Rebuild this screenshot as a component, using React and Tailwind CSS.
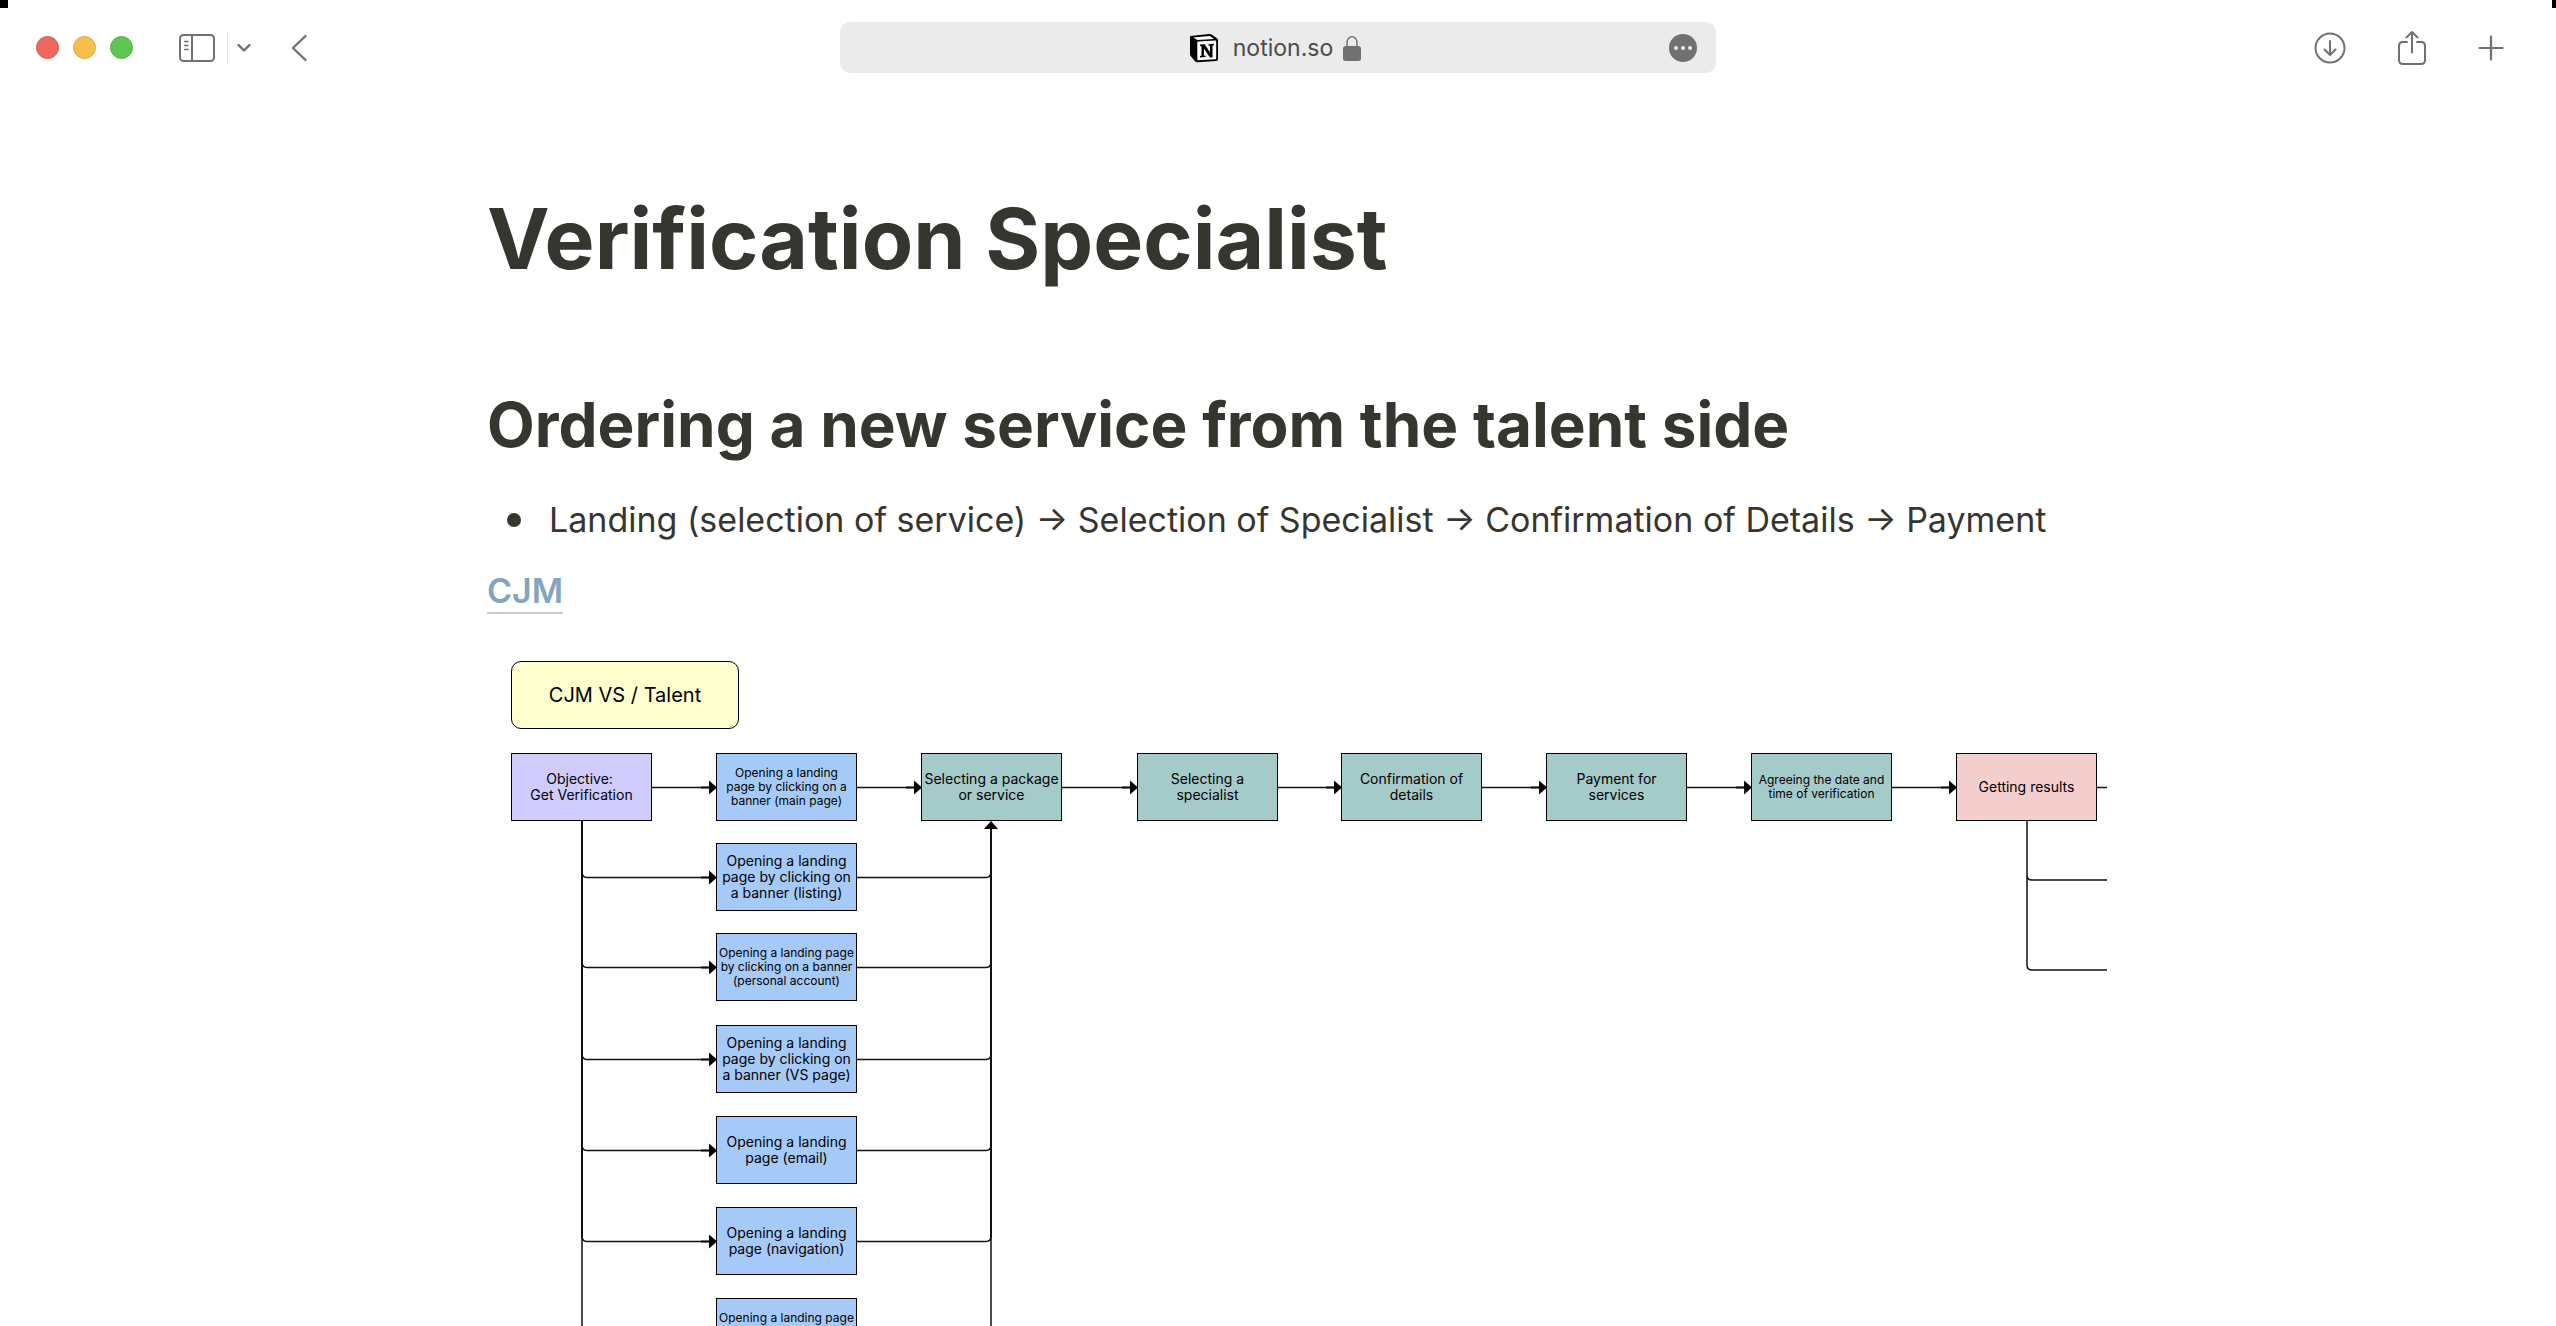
const NODE_W = 141;
const NODE_H = 68;

const nodes = [
  { x: 24, y: 113, tone: "bg-[#cfccfb]", lines: ["Objective: ", "Get Verification"] },
  { x: 229, y: 113, tone: "bg-[#a6caf7]", small: true, lines: ["Opening a landing", "page by clicking on a", "banner (main page)"] },
  { x: 434, y: 113, tone: "bg-[#a5caca]", lines: ["Selecting a package", "or service"] },
  { x: 650, y: 113, tone: "bg-[#a5caca]", lines: ["Selecting a", "specialist"] },
  { x: 854, y: 113, tone: "bg-[#a5caca]", lines: ["Confirmation of", "details"] },
  { x: 1059, y: 113, tone: "bg-[#a5caca]", lines: ["Payment for", "services"] },
  { x: 1264, y: 113, tone: "bg-[#a5caca]", small: true, lines: ["Agreeing the date and", "time of verification"] },
  { x: 1469, y: 113, tone: "bg-[#f4cecc]", lines: ["Getting results"] },
  { x: 229, y: 203, tone: "bg-[#a6caf7]", lines: ["Opening a landing", "page by clicking on", "a banner (listing)"] },
  { x: 229, y: 293, tone: "bg-[#a6caf7]", small: true, lines: ["Opening a landing page", "by clicking on a banner", "(personal account)"] },
  { x: 229, y: 385, tone: "bg-[#a6caf7]", lines: ["Opening a landing", "page by clicking on", "a banner (VS page)"] },
  { x: 229, y: 476, tone: "bg-[#a6caf7]", lines: ["Opening a landing", "page (email)"] },
  { x: 229, y: 567, tone: "bg-[#a6caf7]", lines: ["Opening a landing", "page (navigation)"] },
  { x: 229, y: 658, tone: "bg-[#a6caf7]", small: true, lines: ["Opening a landing page", " ", " "] },
];

const mainRow = nodes.slice(0, 8);
const branchRows = [237, 327, 419, 510, 601, 692];
const MAIN_Y = 147;
const LEFT_BUS = 95;
const RIGHT_BUS = 504;

function Node({ x, y, tone, small, lines }) {
  return (
    <div
      className={`absolute flex flex-col items-center justify-center whitespace-pre border border-black text-center text-black ${tone} ${
        small ? "text-[12px] leading-[14px]" : "text-[14px] leading-[16px]"
      }`}
      style={{ left: x, top: y, width: NODE_W, height: NODE_H }}
    >
      {lines.map((line, i) => (
        <span key={i}>{line}</span>
      ))}
    </div>
  );
}

function ArrowRight({ x, y }) {
  return (
    <>
      <path d={`M${x - 15} ${y}H${x - 6}`} strokeWidth="2" />
      <path d={`M${x - 7} ${y - 7}L${x + 1} ${y}L${x - 7} ${y + 7}Z`} fill="#000" stroke="none" />
    </>
  );
}

function Connectors() {
  return (
    <svg className="absolute inset-0 h-full w-full" fill="none" stroke="#111" strokeWidth="1.5" aria-hidden="true">
      {mainRow.slice(0, -1).map((n, i) => (
        <g key={n.x}>
          <path d={`M${n.x + NODE_W} ${MAIN_Y + 0.5}H${mainRow[i + 1].x - 6}`} />
          <ArrowRight x={mainRow[i + 1].x} y={MAIN_Y + 0.5} />
        </g>
      ))}
      {branchRows.map((y) => (
        <g key={y}>
          <path d={`M${LEFT_BUS} 181V${y - 5}Q${LEFT_BUS} ${y + 0.5} ${LEFT_BUS + 5} ${y + 0.5}H224`} />
          <ArrowRight x={229} y={y + 0.5} />
          <path d={`M370 ${y + 0.5}H${RIGHT_BUS - 5}Q${RIGHT_BUS} ${y + 0.5} ${RIGHT_BUS} ${y - 5}V188`} />
        </g>
      ))}
      <path d={`M${LEFT_BUS} 181V597M${RIGHT_BUS} 186V597`} strokeWidth="2" />
      <path d={`M${RIGHT_BUS - 7} 189L${RIGHT_BUS} 181L${RIGHT_BUS + 7} 189Z`} fill="#000" stroke="none" />
      <path d="M1610 147.5H1630M1540 181V235Q1540 240 1545 240H1630M1540 181V325Q1540 330 1545 330H1630" />
    </svg>
  );
}

function NotionLogo() {
  return (
    <svg viewBox="0 0 30 30" className="h-[30px] w-[30px]" aria-hidden="true">
      <path d="M1.5 3 20 1a4 4 0 0 1 3 .8L28 5.2q1 .8 1 2V26q0 1.800-2 2L8.500 29.200q-1.600.1-2.500-1L1.800 23.300Q1 22.300 1 21V4.500Q1 3.200 1.500 3Z" fill="#000" />
      <path d="m4.200 4.400 16-1.400q.8 0 1.300.4l3.500 2.500L8.500 7Z" fill="#fff" />
      <path d="M8.300 9.600q0-1 1-1.100l17-1q.9 0 .9.900v16.800q0 1-1 1.100L9.300 27.200q-1 0-1-1Z" fill="#fff" />
      <path d="M11 11.600l4.600-.3 5.400 8v-6.600l-1.600-.2v-1.300l5.600-.4v1.300l-1.500.5v11.800l-2.600.2-6-9v6.800l1.800.4v1.200l-5.700.4v-1.300l1.500-.5V13.200l-1.500-.3Z" fill="#000" />
    </svg>
  );
}

export default function App() {
  return (
    <div className="relative flex h-screen flex-col overflow-hidden bg-white font-['Inter',sans-serif] text-[#373530]">
      <span className="absolute left-0 top-0 h-2 w-2 bg-black" />
      <span className="absolute right-0 top-0 h-2 w-1 bg-black" />

      <header className="grid h-[95px] shrink-0 grid-cols-[1fr_876px_1fr] items-center text-[#717171]">
        <div className="flex items-center pl-9">
          <div className="flex gap-[14px]">
            <button aria-label="Close window" className="h-[23px] w-[23px] rounded-full border border-[#d65a51] bg-[#eb695f]" />
            <button aria-label="Minimize window" className="h-[23px] w-[23px] rounded-full border border-[#dda943] bg-[#f4bf4f]" />
            <button aria-label="Zoom window" className="h-[23px] w-[23px] rounded-full border border-[#55b046] bg-[#61c554]" />
          </div>
          <button aria-label="Show sidebar" className="ml-[46px]">
            <svg viewBox="0 0 36 28" className="h-7 w-9" fill="none" stroke="currentColor" strokeWidth="2" strokeLinecap="round">
              <rect x="1" y="1" width="34" height="26" rx="3.500" />
              <path d="M13 1v26" />
              <path d="M5.500 7.500h3.500M5.500 11.500h3.500M5.500 15.500h3.500" strokeWidth="1.500" />
            </svg>
          </button>
          <span className="ml-3 h-8 w-px bg-[#e4e4e4]" />
          <button aria-label="Sidebar options" className="ml-[9px]">
            <svg viewBox="0 0 14 10" className="h-[10px] w-[14px]" fill="none" stroke="currentColor" strokeWidth="2.400" strokeLinecap="round" strokeLinejoin="round">
              <path d="m1.500 2 5.500 5.500L12.500 2" />
            </svg>
          </button>
          <button aria-label="Back" className="ml-10">
            <svg viewBox="0 0 16 28" className="h-7 w-4" fill="none" stroke="currentColor" strokeWidth="2.400" strokeLinecap="round" strokeLinejoin="round">
              <path d="M14.500 2 2 14l12.500 12" />
            </svg>
          </button>
        </div>

        <div className="relative flex h-[51px] items-center justify-center gap-[10px] rounded-[10px] bg-[#ebebeb] pr-[6px]">
          <NotionLogo />
          <span className="ml-1 text-[23px] leading-8 text-[#4b4b4b]">notion.so</span>
          <svg viewBox="0 0 18 26" className="h-[26px] w-[18px]" aria-hidden="true">
            <path d="M4 13V7.500a5 5.700 0 0 1 10 0V13" fill="none" stroke="#717171" strokeWidth="1.500" />
            <rect x="0" y="11" width="18" height="15" rx="2.500" fill="#717171" />
          </svg>
          <button aria-label="Page menu" className="absolute right-[19px] flex h-7 w-7 items-center justify-center gap-[3px] rounded-full bg-[#717171]">
            <span className="h-1 w-1 rounded-full bg-[#ebebeb]" />
            <span className="h-1 w-1 rounded-full bg-[#ebebeb]" />
            <span className="h-1 w-1 rounded-full bg-[#ebebeb]" />
          </button>
        </div>

        <div className="flex items-center justify-end gap-[52px] pr-[52px]">
          <button aria-label="Downloads">
            <svg viewBox="0 0 32 32" className="h-8 w-8" fill="none" stroke="currentColor" strokeWidth="2" strokeLinecap="round" strokeLinejoin="round">
              <circle cx="16" cy="16" r="14.500" />
              <path d="M16 9v14M10.500 17.500 16 23l5.500-5.500" />
            </svg>
          </button>
          <button aria-label="Share">
            <svg viewBox="0 0 28 36" className="h-9 w-7" fill="none" stroke="currentColor" strokeWidth="2" strokeLinecap="round" strokeLinejoin="round">
              <path d="M9 12H5q-4 0-4 4v14q0 4 4 4h18q4 0 4-4V16q0-4-4-4h-4" />
              <path d="M14 22.500V2M8.500 7.500 14 2l5.500 5.500" />
            </svg>
          </button>
          <button aria-label="New tab">
            <svg viewBox="0 0 26 26" className="h-[26px] w-[26px]" fill="none" stroke="currentColor" strokeWidth="2.200" strokeLinecap="round">
              <path d="M13 1.500v23M1.500 13h23" />
            </svg>
          </button>
        </div>
      </header>

      <main className="min-h-0 flex-1 overflow-hidden pl-[38px]">
        <article className="mx-auto max-w-[1620px]">
          <h1 className="pt-[90px] text-[84px] font-bold leading-[108px]">Verification Specialist</h1>
          <h2 className="mt-[92px] text-[62px] font-bold leading-[80px]">Ordering a new service from the talent side</h2>
          <ul className="mt-[27px]">
            <li className="flex items-center whitespace-nowrap text-[34px] leading-[56px]">
              <span className="ml-5 mr-7 h-[14px] w-[14px] shrink-0 rounded-full bg-[#373530]" />
              Landing (selection of service) → Selection of Specialist → Confirmation of Details → Payment
            </li>
          </ul>
          <p className="mt-[22px] flex text-[34px] font-semibold leading-[42px]">
            <a href="#cjm" className="border-b-2 border-[#c9c9c9] text-[#83a5c1]">CJM</a>
          </p>

          <section id="cjm" aria-label="CJM diagram" className="relative mt-[26px] h-[760px] overflow-hidden">
            <Connectors />
            <div className="absolute left-[24px] top-[21px] flex h-[68px] w-[228px] items-center justify-center rounded-[10px] border border-black bg-[#fefecf] text-[20px] leading-6 text-black">
              CJM VS / Talent
            </div>
            {nodes.map((n) => (
              <Node key={`${n.x}-${n.y}`} {...n} />
            ))}
          </section>
        </article>
      </main>
    </div>
  );
}
